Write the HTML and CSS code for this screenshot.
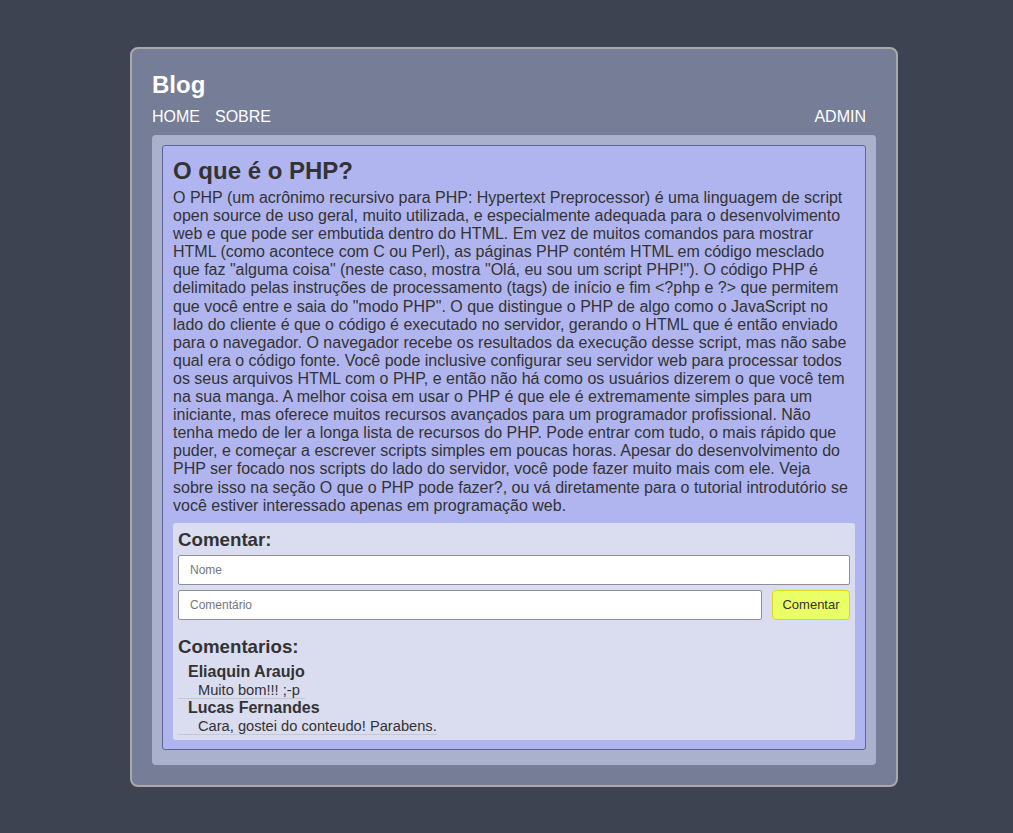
FILE: index.html
```html
<!DOCTYPE html>
<html lang="pt">
<head>
<meta charset="utf-8">
<title>Blog</title>
<link rel="stylesheet" href="styles.css">
</head>
<body>
<div class="page">
  <header class="header">
    <h1 class="brand">Blog</h1>
    <nav class="nav">
      <a class="nav-link" href="#">HOME</a>
      <a class="nav-link" href="#">SOBRE</a>
      <a class="nav-link nav-admin" href="#">ADMIN</a>
    </nav>
  </header>
  <main class="main">
    <article class="post">
      <h2 class="post-title">O que é o PHP?</h2>
      <p class="post-body">O PHP (um acrônimo recursivo para PHP: Hypertext Preprocessor) é uma linguagem de script open source de uso geral, muito utilizada, e especialmente adequada para o desenvolvimento web e que pode ser embutida dentro do HTML. Em vez de muitos comandos para mostrar HTML (como acontece com C ou Perl), as páginas PHP contém HTML em código mesclado que faz "alguma coisa" (neste caso, mostra "Olá, eu sou um script PHP!"). O código PHP é delimitado pelas instruções de processamento (tags) de início e fim &lt;?php e ?&gt; que permitem que você entre e saia do "modo PHP". O que distingue o PHP de algo como o JavaScript no lado do cliente é que o código é executado no servidor, gerando o HTML que é então enviado para o navegador. O navegador recebe os resultados da execução desse script, mas não sabe qual era o código fonte. Você pode inclusive configurar seu servidor web para processar todos os seus arquivos HTML com o PHP, e então não há como os usuários dizerem o que você tem na sua manga. A melhor coisa em usar o PHP é que ele é extremamente simples para um iniciante, mas oferece muitos recursos avançados para um programador profissional. Não tenha medo de ler a longa lista de recursos do PHP. Pode entrar com tudo, o mais rápido que puder, e começar a escrever scripts simples em poucas horas. Apesar do desenvolvimento do PHP ser focado nos scripts do lado do servidor, você pode fazer muito mais com ele. Veja sobre isso na seção O que o PHP pode fazer?, ou vá diretamente para o tutorial introdutório se você estiver interessado apenas em programação web.</p>
      <section class="comments">
        <h3 class="comments-title">Comentar:</h3>
        <form class="comment-form">
          <input class="field" type="text" placeholder="Nome">
          <div class="form-row">
            <input class="field field-grow" type="text" placeholder="Comentário">
            <button class="btn" type="button">Comentar</button>
          </div>
        </form>
        <h3 class="comments-title comments-list-title">Comentarios:</h3>
        <div class="comment">
          <div class="comment-author">Eliaquin Araujo</div>
          <div class="comment-text">Muito bom!!! ;-p</div>
        </div>
        <div class="comment">
          <div class="comment-author">Lucas Fernandes</div>
          <div class="comment-text">Cara, gostei do conteudo! Parabens.</div>
        </div>
      </section>
    </article>
  </main>
</div>
</body>
</html>
```
FILE: styles.css
```css
html, body {
  margin: 0;
  padding: 0;
}
body {
  background: #3e4351;
  font-family: "Liberation Sans", Arial, sans-serif;
  color: #333;
  padding: 47px 0 40px 130px;
}
.page {
  width: 724px;
  padding: 22px 20px 20px;
  background: #767d97;
  border: 2px solid #a9a9a9;
  border-radius: 8px;
}
.brand {
  margin: 0;
  font-size: 24px;
  line-height: 27px;
  font-weight: bold;
  color: #fff;
}
.nav {
  display: flex;
  gap: 15px;
  margin-top: 10px;
  line-height: 18px;
}
.nav-link {
  color: #fff;
  text-decoration: none;
  font-size: 16px;
}
.nav-admin {
  margin-left: auto;
  margin-right: 10px;
}
.main {
  margin-top: 9px;
  background: #a9b1cc;
  border-radius: 4px;
  padding: 10px 10px 15px;
}
.post {
  background: #b0b5ef;
  border: 1px solid #5f6494;
  border-radius: 3px;
  padding: 10px 10px 9px;
}
.post-title {
  margin: 1px 0 0;
  font-size: 24px;
  line-height: 27px;
  color: #333;
}
.post-body {
  margin: 5px 4px 8px 0;
  font-size: 16px;
  line-height: 18.1px;
}
.comments {
  background: #dadcf0;
  border-radius: 3px;
  padding: 5px 5px 5px;
}
.comments-title {
  margin: 0;
  font-size: 18.72px;
  line-height: 23px;
}
.comment-form {
  margin: 4px 0 0;
}
.field {
  display: block;
  box-sizing: border-box;
  width: 100%;
  height: 30px;
  margin: 0;
  border: 1px solid #8f8f9c;
  border-radius: 2px;
  background: #fff;
  padding: 0 11px;
  font-family: "Liberation Sans", Arial, sans-serif;
  font-size: 12px;
  color: #333;
}
.field::placeholder {
  color: #777;
}
.form-row {
  display: flex;
  gap: 10px;
  margin-top: 5px;
}
.field-grow {
  flex: 1;
  width: auto;
}
.btn {
  box-sizing: border-box;
  width: 78px;
  height: 30px;
  background: #eaff66;
  border: 1px solid #dcd81a;
  border-radius: 4px;
  font-family: "Liberation Sans", Arial, sans-serif;
  font-size: 13px;
  color: #333;
  padding: 0;
}
.comments-list-title {
  margin-top: 15px;
  margin-bottom: 5px;
}
.comment {
  width: fit-content;
  border-bottom: 1px solid #c6c6d0;
}
.comment-author {
  padding-left: 10px;
  font-weight: bold;
  font-size: 16px;
  line-height: 17px;
}
.comment-text {
  padding-left: 20px;
  font-size: 14.67px;
  line-height: 16px;
  margin-top: 2px;
}
```
